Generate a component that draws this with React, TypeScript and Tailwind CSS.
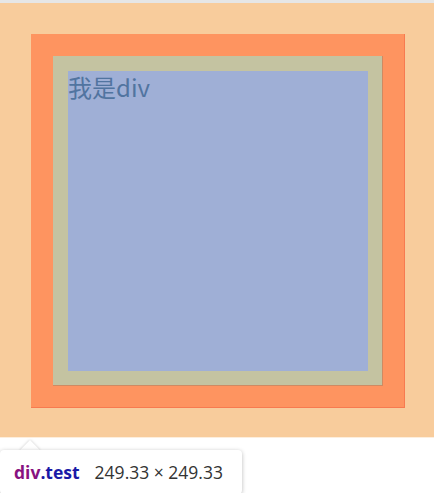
const App = () => {
    return (
        <div className="w-[435px] h-[493px] bg-white overflow-hidden relative" style={{ fontFamily: '"Segoe UI", "Open Sans", "Noto Sans CJK SC", sans-serif' }}>
            <div className="h-[3px] bg-[#e6e6e6] w-[434px]"></div>

            {/* margin */}
            <div className="w-[434px] h-[434px] bg-[#f8cc9c] p-[31px]">
                {/* border */}
                <div className="w-[374px] h-[374px] bg-[#fe9460] border-r border-b border-[#f77a50] p-[22px] pr-[21px] pb-[21px]">
                    {/* padding */}
                    <div className="w-[330px] h-[330px] bg-[#c4c3a1] border-r border-b border-[#cf8a62] p-[15px] pr-[14px] pb-[14px]">
                        {/* content */}
                        <div className="w-[300px] h-[300px] bg-[#9fafd6]">
                            <div className="text-[24px] leading-[32px] text-[#5174a0]" style={{ fontFamily: '"Noto Sans CJK SC", "Open Sans", sans-serif' }}>
                                我是div
                            </div>
                        </div>
                    </div>
                </div>
            </div>

            <div className="h-[1px] w-[434px] bg-[#fdeedd]"></div>

            {/* tooltip */}
            <div className="relative mt-[12px] w-[242px] h-[44px]">
                <div className="absolute left-[23px] -top-[7px] w-[14px] h-[14px] bg-white rotate-45 shadow-[0_0_3px_rgba(0,0,0,0.22)]"></div>
                <div className="relative w-full h-full bg-white rounded-[4px] shadow-[0_1px_4px_rgba(0,0,0,0.28)] flex items-center pl-[14px]">
                    <div className="absolute left-[18px] top-0 w-[24px] h-[8px] bg-white"></div>
                    <span className="relative text-[17.5px] font-bold text-[#881280]">div</span>
                    <span className="relative text-[17.5px] font-bold text-[#1a1aa6]">.test</span>
                    <span className="relative text-[17.5px] text-[#333333] ml-[15px]">249.33 × 249.33</span>
                </div>
            </div>
        </div>
    );
};

export default App;
